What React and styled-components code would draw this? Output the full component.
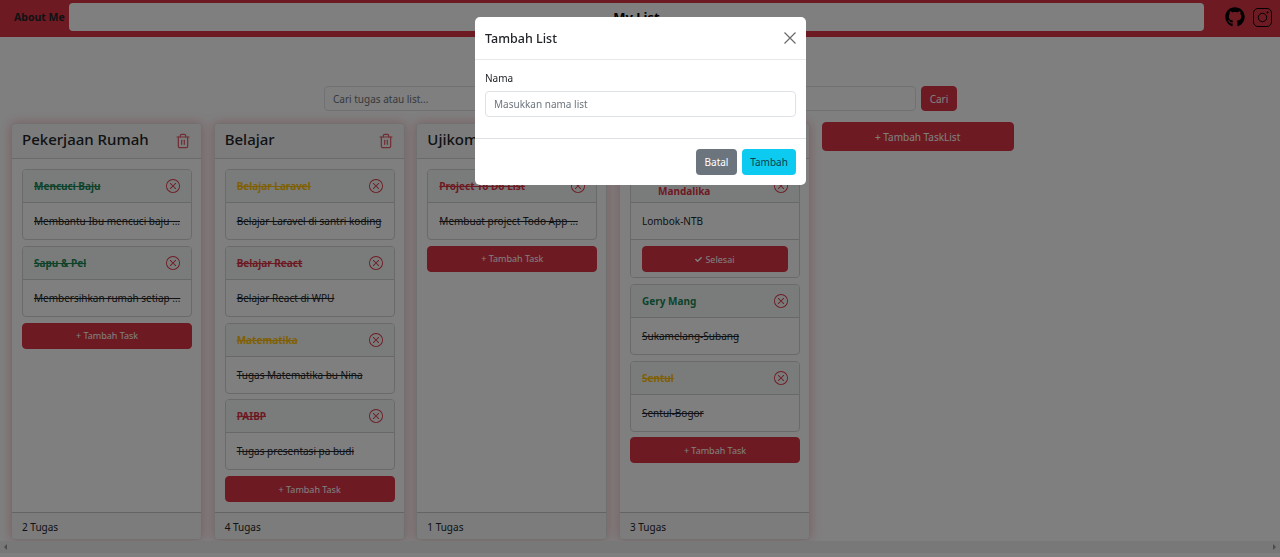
import React from 'react'
import styled, { createGlobalStyle } from 'styled-components'
import { FaGithub, FaCheck } from 'react-icons/fa'
import { BsXCircle } from 'react-icons/bs'
import { Trash2 } from 'lucide-react'

const GlobalStyle = createGlobalStyle`
	html, body { margin: 0; height: 100%; overflow: hidden; background: #fff; }
	* { box-sizing: border-box; }
	body { font-family: "Noto Sans", "Open Sans", "Liberation Sans", sans-serif; color: #212529; font-size: 10px; }
`;

const Page = styled.div`
	display: flex;
	flex-direction: column;
	height: 557px;
`;

const Navbar = styled.nav`
	display: flex;
	align-items: center;
	height: 37px;
	padding: 3px 8px 6px 14px;
	background: #dc3545;
`;

const NavLink = styled.a`
	font-size: 10.5px;
	font-weight: 700;
	color: #212529;
	margin-right: 4px;
	white-space: nowrap;
`;

const TitleBar = styled.div`
	flex: 1;
	height: 28px;
	line-height: 28px;
	background: #fff;
	border-radius: 4px;
	text-align: center;
	font-size: 13px;
	font-weight: 700;
	color: #000;
`;

const Socials = styled.div`
	display: flex;
	align-items: center;
	gap: 8px;
	margin-left: 21px;
	color: #000;
	font-size: 20px;
`;

const InstagramIcon = styled.svg`
	width: 19px;
	height: 19px;
	fill: none;
	stroke: #000;
	stroke-width: 1;
`;

const SearchRow = styled.form`
	display: flex;
	gap: 5px;
	margin: 49px 0 12px 324px;
	width: 633px;
`;

const SearchInput = styled.input`
	flex: 1;
	height: 25px;
	padding: 0 8px;
	font: inherit;
	border: 1px solid #dee2e6;
	border-radius: 4px;
	&::placeholder { color: #6c757d; }
`;

const RedButton = styled.button`
	border: 1px solid #dc3545;
	background: #dc3545;
	color: #fff;
	font: inherit;
	border-radius: 4px;
	display: flex;
	align-items: center;
	justify-content: center;
	gap: 3px;
	height: ${p => p.$h || 26}px;
	width: ${p => (p.$w ? `${p.$w}px` : '100%')};
	flex-shrink: 0;
	font-size: ${p => p.$fs || 9}px;
`;

const AddListButton = styled(RedButton)`
	margin: -1px 0 0 0;
`;

const Board = styled.div`
	flex: 1;
	min-height: 0;
	display: flex;
	align-items: stretch;
	gap: 11.67px;
	padding: 0 0 0 11px;
`;

const Column = styled.section`
	width: 191px;
	display: flex;
	flex-direction: column;
	background: #fff;
	border: 1px solid #e2e2e2;
	border-radius: 4px;
	box-shadow: 0 0 12px rgba(220, 53, 69, 0.35);
`;

const ColumnHead = styled.header`
	display: flex;
	align-items: center;
	justify-content: space-between;
	height: 35px;
	padding: 0 10px;
	background: #f8f8f8;
	border-bottom: 1px solid #d4d4d4;
	border-radius: 4px 4px 0 0;
`;

const ColumnTitle = styled.h2`
	margin: -5px 0 0;
	font-size: 15px;
	font-weight: 500;
	color: #212529;
	white-space: nowrap;
`;

const TrashButton = styled.span`
	display: flex;
	color: #dc3545;
	opacity: 0.8;
`;

const ColumnBody = styled.div`
	flex: 1;
	min-height: 0;
	padding: 10px 9px 0 10px;
	display: flex;
	flex-direction: column;
	gap: 5.75px;
`;

const ColumnFoot = styled.footer`
	height: 27px;
	line-height: 28px;
	padding: 0 10px;
	background: #f8f8f8;
	border-top: 1px solid #c8c8c8;
	border-radius: 0 0 4px 4px;
`;

const TaskCard = styled.article`
	flex-shrink: 0;
	border: 1px solid #d4d4d4;
	border-radius: 4px;
	background: #fff;
	overflow: hidden;
`;

const TaskHead = styled.div`
	display: flex;
	align-items: center;
	justify-content: space-between;
	height: 33px;
	padding: 0 11px;
	background: #f5f8f8;
	border-bottom: 1px solid #d0d0d0;
`;

const TaskName = styled.span`
	font-weight: 700;
	font-size: 10px;
	color: ${p => p.$color};
	text-decoration: ${p => (p.$done ? 'line-through' : 'none')};
	${p => p.$indent && 'padding-left: 16px; padding-top: 10px;'}
`;

const RemoveIcon = styled.span`
	display: flex;
	color: #dc3545;
	font-size: 14px;
`;

const TaskText = styled.p`
	margin: 0;
	height: 36px;
	line-height: 37px;
	padding: 0 11px;
	white-space: nowrap;
	overflow: hidden;
	text-decoration: ${p => (p.$done ? 'line-through' : 'none')};
`;

const TaskFoot = styled.div`
	padding: 6px 11px 5px;
	border-top: 1px solid #d0d0d0;
	background: #fdfdfd;
`;

const ScrollStrip = styled.div`
	display: flex;
	align-items: center;
	justify-content: space-between;
	height: 12px;
	margin: 1px 0 4px;
	padding: 0 4px;
	background: #f1f1f1;
`;

const Arrow = styled.i`
	width: 0;
	height: 0;
	border-top: 3px solid transparent;
	border-bottom: 3px solid transparent;
	${p => (p.$right ? 'border-left: 3px solid #999;' : 'border-right: 3px solid #999;')}
`;

const Backdrop = styled.div`
	position: fixed;
	inset: 0;
	background: rgba(0, 0, 0, 0.5);
`;

const Modal = styled.div`
	position: absolute;
	top: 17px;
	left: 475px;
	width: 331px;
	background: #fff;
	border-radius: 5px;
	color: #212529;
`;

const ModalHead = styled.div`
	display: flex;
	align-items: center;
	justify-content: space-between;
	height: 43px;
	padding: 0 10px;
	border-bottom: 1px solid #e9e9e9;
`;

const ModalTitle = styled.h3`
	margin: 0;
	font-size: 12.5px;
	font-weight: 500;
`;

const CloseButton = styled.svg`
	width: 12px;
	height: 12px;
	stroke: #6a6a6a;
	stroke-width: 1.2;
	fill: none;
`;

const ModalBody = styled.div`
	height: 78px;
	padding: 11px 10px 0;
`;

const FieldLabel = styled.label`
	display: block;
	margin-bottom: 6px;
	line-height: 14px;
`;

const FieldInput = styled.input`
	display: block;
	width: 100%;
	height: 26px;
	padding: 0 8px;
	font: inherit;
	border: 1px solid #dee2e6;
	border-radius: 4px;
	&::placeholder { color: #6c757d; }
`;

const ModalFoot = styled.div`
	display: flex;
	justify-content: flex-end;
	gap: 5px;
	height: 47px;
	padding: 10px 10px 0;
	border-top: 1px solid #dee2e6;
`;

const ModalButton = styled.button`
	height: 26px;
	padding: 0;
	width: ${p => p.$w}px;
	border: 0;
	border-radius: 4px;
	font: inherit;
	background: ${p => p.$bg};
	color: ${p => p.$fg};
`;

const GREEN = '#198754'
const YELLOW = '#ffc107'
const RED = '#dc3545'

const lists = [
	{
		title: 'Pekerjaan Rumah', count: '2 Tugas',
		tasks: [
			{ name: 'Mencuci Baju', color: GREEN, text: 'Membantu Ibu mencuci baju ...', done: true },
			{ name: 'Sapu & Pel', color: GREEN, text: 'Membersihkan rumah setiap ...', done: true },
		],
	},
	{
		title: 'Belajar', count: '4 Tugas',
		tasks: [
			{ name: 'Belajar Laravel', color: YELLOW, text: 'Belajar Laravel di santri koding', done: true },
			{ name: 'Belajar React', color: RED, text: 'Belajar React di WPU', done: true },
			{ name: 'Matematika', color: YELLOW, text: 'Tugas Matematika bu Nina', done: true },
			{ name: 'PAIBP', color: RED, text: 'Tugas presentasi pa budi', done: true },
		],
	},
	{
		title: 'Ujikom', count: '1 Tugas',
		tasks: [
			{ name: 'Project To Do List', color: RED, text: 'Membuat project Todo App ...', done: true },
		],
	},
	{
		title: 'Liburan', count: '3 Tugas',
		tasks: [
			{ name: 'Mandalika', color: RED, text: 'Lombok-NTB', indent: true, pending: true },
			{ name: 'Gery Mang', color: GREEN, text: 'Sukamelang-Subang', strikeText: true },
			{ name: 'Sentul', color: YELLOW, text: 'Sentul-Bogor', done: true, strikeText: true },
		],
	},
]

const Task = ({ task }) => (
	<TaskCard>
		<TaskHead>
			<TaskName $color={task.color} $done={task.done} $indent={task.indent}>{task.name}</TaskName>
			<RemoveIcon><BsXCircle /></RemoveIcon>
		</TaskHead>
		<TaskText $done={task.done || task.strikeText}>{task.text}</TaskText>
		{task.pending && (
			<TaskFoot>
				<RedButton><FaCheck size={7} /> Selesai</RedButton>
			</TaskFoot>
		)}
	</TaskCard>
)

const App = () => (
	<Page>
		<GlobalStyle />
		<Navbar>
			<NavLink>About Me</NavLink>
			<TitleBar>My List</TitleBar>
			<Socials>
				<FaGithub />
				<InstagramIcon viewBox="0 0 19 19">
					<rect x="0.5" y="0.5" width="18" height="18" rx="4.5" />
					<circle cx="9.5" cy="9.5" r="4.2" />
					<circle cx="14.6" cy="4.4" r="0.6" fill="#000" />
				</InstagramIcon>
			</Socials>
		</Navbar>
		<SearchRow>
			<SearchInput placeholder="Cari tugas atau list..." />
			<RedButton $w={36} $h={25} $fs={10}>Cari</RedButton>
		</SearchRow>
		<Board>
			{lists.map(list => (
				<Column key={list.title}>
					<ColumnHead>
						<ColumnTitle>{list.title}</ColumnTitle>
						<TrashButton><Trash2 size={16} strokeWidth={1.8} /></TrashButton>
					</ColumnHead>
					<ColumnBody>
						{list.tasks.map(task => <Task key={task.name} task={task} />)}
						<RedButton>+ Tambah Task</RedButton>
					</ColumnBody>
					<ColumnFoot>{list.count}</ColumnFoot>
				</Column>
			))}
			<AddListButton $w={192} $h={29} $fs={10}>+ Tambah TaskList</AddListButton>
		</Board>
		<ScrollStrip>
			<Arrow />
			<Arrow $right />
		</ScrollStrip>
		<Backdrop>
			<Modal>
				<ModalHead>
					<ModalTitle>Tambah List</ModalTitle>
					<CloseButton viewBox="0 0 12 12"><path d="M0.5 0.5 L11.5 11.5 M11.5 0.5 L0.5 11.5" /></CloseButton>
				</ModalHead>
				<ModalBody>
					<FieldLabel>Nama</FieldLabel>
					<FieldInput placeholder="Masukkan nama list" />
				</ModalBody>
				<ModalFoot>
					<ModalButton $w={41} $bg="#6c757d" $fg="#fff">Batal</ModalButton>
					<ModalButton $w={54} $bg="#0dcaf0" $fg="#10404f">Tambah</ModalButton>
				</ModalFoot>
			</Modal>
		</Backdrop>
	</Page>
)

export default App
